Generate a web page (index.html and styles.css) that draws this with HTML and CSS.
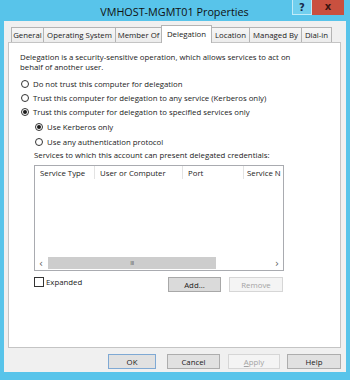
FILE: index.html
```html
<!DOCTYPE html>
<html>
<head>
<meta charset="utf-8">
<link rel="stylesheet" href="styles.css">
</head>
<body>
<div class="window">
  <div class="titlebar">
    <div class="title">VMHOST-MGMT01 Properties</div>
    <div class="controls">
      <div class="ctl ctl-help">?</div>
      <div class="ctl ctl-close">x</div>
    </div>
  </div>
  <div class="frame">
    <div class="client">
      <div class="tabs">
        <div class="tab tab-general">General</div>
        <div class="tab tab-os">Operating System</div>
        <div class="tab tab-member">Member Of</div>
        <div class="tab tab-deleg active">Delegation</div>
        <div class="tab tab-loc">Location</div>
        <div class="tab tab-managed">Managed By</div>
        <div class="tab tab-dial">Dial-in</div>
      </div>
      <div class="panel">
        <p class="desc">Delegation is a security-sensitive operation, which allows services to act on behalf of another user.</p>
        <div class="radios">
          <div class="row"><span class="radio"></span>Do not trust this computer for delegation</div>
          <div class="row"><span class="radio"></span>Trust this computer for delegation to any service (Kerberos only)</div>
          <div class="row"><span class="radio on"></span>Trust this computer for delegation to specified services only</div>
          <div class="row sub tall"><span class="radio on"></span>Use Kerberos only</div>
          <div class="row sub tall"><span class="radio"></span>Use any authentication protocol</div>
        </div>
        <div class="services-label">Services to which this account can present delegated credentials:</div>
        <div class="list">
          <div class="list-head">
            <span class="col col-1">Service Type</span>
            <span class="col col-2">User or Computer</span>
            <span class="col col-3">Port</span>
            <span class="col col-4">Service N</span>
          </div>
          <div class="list-body"></div>
          <div class="hscroll">
            <span class="arrow">&lsaquo;</span>
            <div class="track"><div class="thumb">III</div></div>
            <span class="arrow">&rsaquo;</span>
          </div>
        </div>
        <div class="list-actions">
          <div class="check"><span class="box"></span>Expanded</div>
          <div class="btn btn-add">Add...</div>
          <div class="btn btn-remove disabled">Remove</div>
        </div>
      </div>
      <div class="footer">
        <div class="btn btn-ok default">OK</div>
        <div class="btn btn-cancel">Cancel</div>
        <div class="btn btn-apply disabled"><u>A</u>pply</div>
        <div class="btn btn-help">Help</div>
      </div>
    </div>
  </div>
</div>
</body>
</html>
```

FILE: styles.css
```css
* { box-sizing: border-box; }
html, body { margin: 0; padding: 0; }
body {
  width: 350px;
  height: 380px;
  overflow: hidden;
  font-family: "Open Sans", "Noto Sans", sans-serif;
  color: #1a1a1a;
}
.window {
  width: 350px;
  height: 380px;
  background: #58c4ea;
  display: flex;
  flex-direction: column;
}
.titlebar {
  height: 21px;
  display: grid;
  flex: none;
}
.title {
  grid-area: 1 / 1;
  text-align: center;
  align-self: center;
  font-size: 10.8px;
  color: #111;
  padding: 1px 1px 0 0;
}
.controls {
  grid-area: 1 / 1;
  justify-self: end;
  align-self: start;
  display: flex;
  margin-right: 6px;
}
.ctl {
  height: 15px;
  display: flex;
  align-items: center;
  justify-content: center;
  font-weight: bold;
  font-size: 10px;
  font-family: "DejaVu Sans", sans-serif;
}
.ctl-help {
  width: 20px;
  background: #71cfee;
  border: 1px solid #c2ebf8;
  border-top: none;
  color: #17294a;
}
.ctl-close {
  width: 32px;
  background: #c9503f;
  color: #3a1410;
  padding-bottom: 2px;
}
.frame {
  flex: 1;
  padding: 0 4px 8px 4px;
  display: flex;
}
.client {
  flex: 1;
  background: #f0f0f0;
  padding: 4px 5px 3px 4px;
  display: flex;
  flex-direction: column;
  font-size: 7.8px;
}
.tabs {
  height: 17px;
  display: flex;
  align-items: flex-end;
  padding-left: 3px;
  position: relative;
  z-index: 1;
}
.tab {
  height: 15px;
  border: 1px solid #b4b4b4;
  border-bottom: none;
  background: linear-gradient(#f6f6f6, #ececec);
  display: flex;
  align-items: center;
  justify-content: center;
  margin-left: -1px;
  white-space: nowrap;
}
.tab:first-child { margin-left: 0; }
.tab.active {
  height: 18px;
  margin-bottom: -1px;
  background: #fff;
  padding-bottom: 2px;
}
.tab-general { width: 33px; }
.tab-os { width: 73px; }
.tab-member { width: 47px; }
.tab-deleg { width: 51px; }
.tab-loc { width: 39px; }
.tab-managed { width: 53px; }
.tab-dial { width: 31px; }
.panel {
  height: 306px;
  width: 333px;
  background: #fff;
  border: 1px solid #c4c4c4;
  padding: 9px 0 0 11px;
  flex: none;
}
.desc {
  margin: 0;
  width: 275px;
  line-height: 10px;
}
.radios {
  margin-top: 5px;
}
.row {
  height: 14px;
  display: flex;
  align-items: center;
  padding-left: 1px;
  white-space: nowrap;
}
.row.tall { height: 15px; }
.row.sub { padding-left: 15px; }
.radio {
  width: 8px;
  height: 8px;
  border: 1px solid #333;
  border-radius: 50%;
  background: #fff;
  margin-right: 4px;
  display: flex;
  align-items: center;
  justify-content: center;
  flex: none;
}
.radio.on::after {
  content: "";
  width: 4px;
  height: 4px;
  border-radius: 50%;
  background: #1a1a1a;
}
.services-label {
  margin-top: 1px;
  line-height: 10px;
  padding-left: 14px;
}
.list {
  margin: 5px 0 0 14px;
  width: 250px;
  height: 106px;
  border: 1px solid #a9abb0;
  background: #fff;
  display: flex;
  flex-direction: column;
}
.list-head {
  height: 13px;
  display: flex;
  overflow: hidden;
  flex: none;
}
.col {
  padding-left: 5px;
  border-right: 1px solid #e3e3e3;
  display: flex;
  align-items: center;
  white-space: nowrap;
  flex: none;
}
.col-1 { width: 60px; }
.col-2 { width: 88px; }
.col-3 { width: 61px; }
.col-4 { width: 40px; border-right: none; overflow: hidden; padding-left: 3px; }
.list-body { flex: 1; }
.hscroll {
  height: 14px;
  display: flex;
  flex: none;
  background: #fff;
}
.arrow {
  width: 12px;
  display: flex;
  align-items: center;
  justify-content: center;
  color: #606060;
  font-size: 10px;
  font-family: "DejaVu Sans", sans-serif;
}
.track {
  flex: 1;
  display: flex;
  align-items: stretch;
  padding: 1px 0;
}
.thumb {
  margin-left: 1px;
  width: 168px;
  background: #cdcdcd;
  display: flex;
  align-items: center;
  justify-content: center;
  font-size: 6px;
  letter-spacing: -0.5px;
  color: #555;
}
.list-actions {
  margin: 6px 0 0 14px;
  width: 250px;
  display: flex;
  align-items: flex-start;
}
.check {
  display: flex;
  align-items: center;
  height: 10px;
  flex: 1;
}
.box {
  width: 10px;
  height: 10px;
  border: 1px solid #333;
  background: #fff;
  margin-right: 2px;
}
.btn {
  height: 15px;
  background: #e1e1e1;
  border: 1px solid #adadad;
  display: flex;
  align-items: center;
  justify-content: center;
  flex: none;
}
.btn-add { width: 53px; background: #dadada; border-color: #a8a8a8; }
.btn-remove { width: 54px; margin-left: 8px; margin-right: 1px; }
.btn.disabled {
  background: #f4f4f4;
  border-color: #d6d6d6;
  color: #a3a3a3;
}
.btn.default { border-color: #7fa9d4; }
.footer {
  margin-top: 6px;
  display: flex;
  justify-content: flex-end;
}
.btn-ok { width: 48px; }
.btn-cancel { width: 53px; margin-left: 11px; }
.btn-apply { width: 52px; margin-left: 8px; }
.btn-help { width: 54px; margin-left: 7px; }
.btn u { text-decoration: underline; }
```
